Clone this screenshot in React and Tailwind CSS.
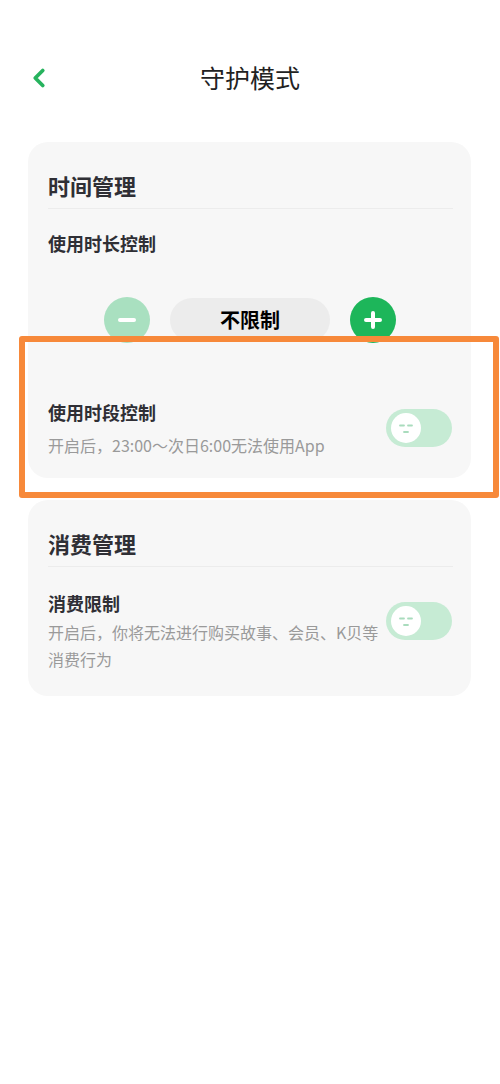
import { ChevronLeft } from "lucide-react";

const FONT = { fontFamily: '"Noto Sans CJK SC", "Noto Sans", sans-serif' };

function FaceToggle() {
  return (
    <div className="w-[66px] h-[38px] rounded-full bg-[#c6ebd4] flex items-center pl-[5px] shrink-0">
      <div className="w-[30px] h-[30px] rounded-full bg-white flex items-center justify-center">
        <svg width="30" height="30" viewBox="0 0 30 30">
          <path d="M9 12.5h4M17 12.5h4M13 19h4" stroke="#a9dcbd" strokeWidth="1.8" strokeLinecap="round" />
        </svg>
      </div>
    </div>
  );
}

function RoundBtn({ sign, light }) {
  return (
    <div className={`w-[46px] h-[46px] rounded-full flex items-center justify-center
                     ${light ? "bg-[#a9e0c0]" : "bg-[#1db65a]"}`}>
      <svg width="22" height="22" viewBox="0 0 22 22">
        <path d={sign === "+" ? "M4 11h14M11 4v14" : "M4 11h14"} stroke="white" strokeWidth="4" strokeLinecap="round" />
      </svg>
    </div>
  );
}

function SectionTitle({ children }) {
  return (
    <div className="pr-[18px]">
      <h2 className="text-[22px] leading-[30px] font-bold text-[#2f2f35]">{children}</h2>
      <div className="mt-[8px] h-px bg-[#ececec]" />
    </div>
  );
}

export default function App() {
  return (
    <div className="relative min-h-[1084px] bg-white pt-[56px]" style={FONT}>

      {/* Header */}
      <div className="relative h-[44px] flex items-center justify-center">
        <ChevronLeft size={30} strokeWidth={3} className="absolute left-[24px] text-[#27b35e]" />
        <h1 className="text-[25px] text-[#222]">守护模式</h1>
      </div>

      {/* Time card */}
      <div className="mt-[42px] ml-[28px] mr-[29px] rounded-[20px] bg-[#f7f7f7] pl-[20px] pt-[28px] pb-[22px]">
        <SectionTitle>时间管理</SectionTitle>
        <div className="mt-[22px] text-[18px] leading-[24px] font-bold text-[#2f2f35]">使用时长控制</div>

        <div className="mt-[42px] flex items-center pr-[20px] ml-[56px] gap-[20px]">
          <RoundBtn sign="-" light />
          <div className="w-[160px] h-[44px] rounded-full bg-[#ececec] flex items-center justify-center text-[20px] font-bold text-black">
            不限制
          </div>
          <RoundBtn sign="+" />
        </div>

        <div className="mt-[57px] flex items-center pr-[19px]">
          <div className="flex-1">
            <div className="text-[18px] leading-[24px] font-bold text-[#2f2f35]">使用时段控制</div>
            <div className="mt-[10px] text-[16px] leading-[22px] text-[#9a9a9a]">开启后，23:00～次日6:00无法使用App</div>
          </div>
          <FaceToggle />
        </div>
      </div>

      {/* Spend card */}
      <div className="mt-[22px] ml-[28px] mr-[29px] rounded-[20px] bg-[#f7f7f7] pl-[20px] pt-[28px] pb-[23px]">
        <SectionTitle>消费管理</SectionTitle>
        <div className="mt-[24px] flex items-start pr-[19px] gap-[6px]">
          <div className="flex-1">
            <div className="text-[18px] leading-[24px] font-bold text-[#2f2f35]">消费限制</div>
            <div className="mt-[4px] text-[16px] leading-[27px] text-[#9a9a9a] max-w-[334px]">
              开启后，你将无法进行购买故事、会员、K贝等消费行为
            </div>
          </div>
          <div className="mt-[11px]">
            <FaceToggle />
          </div>
        </div>
      </div>

      {/* Highlight overlay */}
      <div className="absolute left-[19px] top-[336px] w-[480px] h-[162px] border-[6px] border-[#f7893a] rounded-[3px] pointer-events-none" />
    </div>
  );
}
